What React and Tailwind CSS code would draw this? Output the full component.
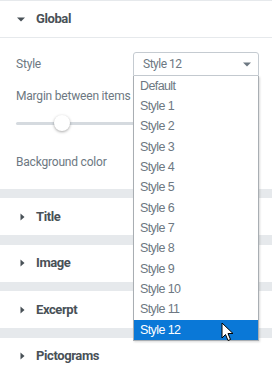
import React from "react";

const items = ["Default","Style 1","Style 2","Style 3","Style 4","Style 5","Style 6","Style 7","Style 8","Style 9","Style 10","Style 11","Style 12"];

function RightCaret() {
  return (
    <svg width="5" height="8" viewBox="0 0 5 8" className="block">
      <path d="M0.5 0.5 L4.5 4 L0.5 7.5 Z" fill="#495157" />
    </svg>
  );
}

function Section({ title }) {
  return (
    <div className="h-[37px] flex items-center pl-[20px] bg-white">
      <RightCaret />
      <span className="ml-[11px] text-[13px] font-bold tracking-[-0.4px] text-[#495157]">{title}</span>
    </div>
  );
}

export default function App() {
  return (
    <div className="relative w-[272px] h-[373px] overflow-hidden bg-white font-['Roboto',sans-serif]">
      <div className="h-[38px] border-t border-b border-[#e6e9ec] flex items-center pl-[17px]">
        <svg width="8" height="5" viewBox="0 0 8 5" className="block">
          <path d="M0 0.5 L8 0.5 L4 4.5 Z" fill="#495157" />
        </svg>
        <span className="ml-[11px] text-[13px] font-bold tracking-[-0.4px] text-[#495157]">Global</span>
      </div>
      <div className="h-[151px] pl-4 pr-[13px] pt-[14px] text-[12px] tracking-[-0.2px] text-[#6d7882]">
        <div className="h-[24px] flex items-center justify-between">
          <span>Style</span>
          <div className="w-[126px] h-[24px] border border-[#c5cbd1] rounded-t-[3px] flex items-center justify-between pl-[9px] pr-[7px] tracking-[-0.5px]">
            <span>Style 12</span>
            <svg width="8" height="5" viewBox="0 0 8 5" className="block">
              <path d="M0 0.5 L8 0.5 L4 4.5 Z" fill="#6d7882" />
            </svg>
          </div>
        </div>
        <div className="mt-[12px] h-[16px] leading-[16px] whitespace-nowrap">Margin between items</div>
        <div className="mt-[11px] h-[16px] relative flex items-center">
          <div className="w-full h-[3px] bg-[#d5dadf] rounded-full" />
          <div className="absolute left-[38px] top-0 w-[16px] h-[16px] rounded-full bg-white shadow-[0_1px_3px_rgba(0,0,0,0.35)]" />
        </div>
        <div className="mt-[23px] h-[16px] leading-[16px]">Background color</div>
      </div>
      <div className="h-[9px] bg-[#e6e9ec]" />
      <Section title="Title" />
      <div className="h-[9.5px] bg-[#e6e9ec]" />
      <Section title="Image" />
      <div className="h-[9.5px] bg-[#e6e9ec]" />
      <Section title="Excerpt" />
      <div className="h-[9.5px] bg-[#e6e9ec]" />
      <Section title="Pictograms" />

      <div className="absolute left-[133px] top-[76px] w-[126px] bg-white border border-[#a9aeb3] border-t-0 shadow-[1px_1px_2px_rgba(0,0,0,0.15)] font-['Liberation_Sans',Arial,sans-serif] text-[12.5px] tracking-[-0.6px]">
        {items.map((it) => (
          <div
            key={it}
            className={
              "h-[20.33px] flex items-center pl-[6px] " +
              (it === "Style 12" ? "bg-[#0a78d7] text-white" : "text-[#6d7882]")
            }
          >
            {it}
          </div>
        ))}
      </div>

      <svg className="absolute left-[221px] top-[322px]" width="13" height="20" viewBox="0 0 13 20">
        <path d="M1 1 L1 16 L4.5 12.5 L7 18.5 L9.5 17.5 L7 11.5 L12 11.5 Z" fill="#fff" stroke="#000" strokeWidth="1" strokeLinejoin="round" />
      </svg>
    </div>
  );
}
